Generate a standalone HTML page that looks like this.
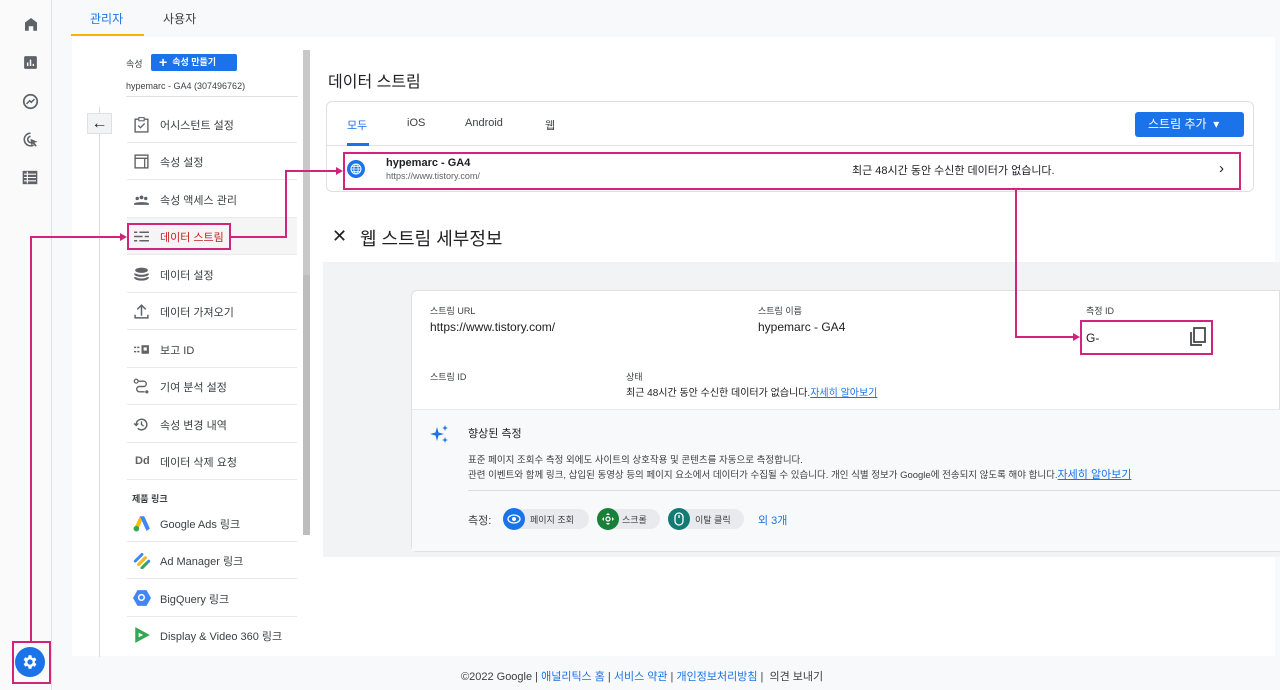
<!DOCTYPE html>
<html><head><meta charset="utf-8"><style>
*{box-sizing:border-box;margin:0;padding:0}
body{width:1280px;height:690px;overflow:hidden;background:#f8f9fa;font-family:"Liberation Sans","Noto Sans CJK KR",sans-serif;color:#3c4043;position:relative}
.a{position:absolute}
.t{font-size:11px;color:#3c4043;white-space:nowrap}
.item{position:absolute;left:127px;width:170px;height:37px;border-bottom:1px solid #e8eaed}
.item svg.ic{position:absolute;left:6px;top:10px;width:17px;height:17px}
.item span.l{position:absolute;left:33px;top:11px;font-size:11px;color:#3c4043;white-space:nowrap}
.pk{position:absolute;background:#d0257a}
.pb{position:absolute;border:2px solid #d0257a}
.blue{color:#1a73e8}
</style></head><body>
<!-- rail -->
<div class="a" style="left:0;top:0;width:52px;height:690px;background:#fafafa;border-right:1px solid #e0e0e0"></div>
<svg class="a" style="left:22px;top:15px" width="18" height="18" viewBox="0 0 24 24"><path d="M4 21V10l8-6 8 6v11h-5v-6H9v6z" fill="#5f6368"/></svg>
<svg class="a" style="left:22px;top:54px" width="17" height="17" viewBox="0 0 24 24"><rect x="3" y="3" width="18" height="18" rx="2" fill="#5f6368"/><path d="M8 17v-5M12 17V8M16 17v-3" stroke="#fff" stroke-width="2"/></svg>
<svg class="a" style="left:21px;top:92px" width="19" height="19" viewBox="0 0 24 24"><circle cx="12" cy="12" r="8.5" fill="none" stroke="#5f6368" stroke-width="2.2"/><path d="M7 15l4-4 2 2 4-4" fill="none" stroke="#5f6368" stroke-width="2"/></svg>
<svg class="a" style="left:21px;top:130px" width="19" height="19" viewBox="0 0 24 24"><path d="M12 4a8 8 0 1 0 4 15" fill="none" stroke="#5f6368" stroke-width="2"/><path d="M12 8a4 4 0 1 0 1 8" fill="none" stroke="#5f6368" stroke-width="2"/><path d="M12 11l9 4-4 1 3 4-2 1-3-4-2 3z" fill="#5f6368"/></svg>
<svg class="a" style="left:22px;top:170px" width="16" height="15" viewBox="0 0 24 22"><rect x="1" y="1" width="22" height="20" fill="#5f6368"/><path d="M3 6h18M3 11h18M3 16h18M8 2v18" stroke="#fff" stroke-width="1.6"/></svg>
<div class="a" style="left:15px;top:647px;width:30px;height:30px;border-radius:50%;background:#1a73e8"></div>
<svg class="a" style="left:21px;top:653px" width="18" height="18" viewBox="0 0 24 24"><path fill="#fff" d="M19.4 13a7.5 7.5 0 0 0 0-2l2.1-1.6-2-3.5-2.5 1a7 7 0 0 0-1.7-1L15 3h-4l-.3 2.7a7 7 0 0 0-1.7 1l-2.5-1-2 3.5L6.6 11a7.5 7.5 0 0 0 0 2l-2.1 1.6 2 3.5 2.5-1a7 7 0 0 0 1.7 1L11 21h4l.3-2.7a7 7 0 0 0 1.7-1l2.5 1 2-3.5zM13 15.5a3.5 3.5 0 1 1 0-7 3.5 3.5 0 0 1 0 7z" transform="translate(-1 0)"/></svg>
<!-- tabs -->
<div class="a t" style="left:90px;top:10px;font-size:12px;color:#1a73e8">관리자</div>
<div class="a t" style="left:163px;top:10px;font-size:12px;color:#3c4043">사용자</div>
<div class="a" style="left:71px;top:34px;width:73px;height:2px;background:#f4b400"></div>
<!-- main white -->
<div class="a" style="left:72px;top:37px;width:1203px;height:619px;background:#fff"></div>
<!-- left panel -->
<div class="a t" style="left:126px;top:57px;font-size:9px">속성</div>
<div class="a" style="left:151px;top:54px;width:86px;height:17px;background:#1a73e8;border-radius:2px;color:#fff;font-size:9px;font-weight:bold;line-height:17px;padding-left:8px"><span style="font-size:14px;vertical-align:-2px">+</span>&nbsp; 속성 만들기</div>
<div class="a t" style="left:126px;top:81px;font-size:9px">hypemarc - GA4 (307496762)</div>
<div class="a" style="left:126px;top:96px;width:172px;height:1px;background:#e0e0e0"></div>
<div class="a" style="left:99px;top:107px;width:1px;height:550px;background:#dadce0"></div>
<div class="a" style="left:87px;top:113px;width:25px;height:21px;background:#f1f3f4;border:1px solid #e0e0e0;text-align:center;font-size:16px;line-height:19px;color:#202124">←</div>
<div class="a" style="left:303px;top:50px;width:7px;height:225px;background:#c8c8c8"></div>
<div class="a" style="left:303px;top:275px;width:7px;height:260px;background:#bdbdbd"></div>
<div class="item" style="top:106px"><svg class="ic" viewBox="0 0 16 16"><rect x="2" y="3" width="12" height="12" fill="none" stroke="#5f6368" stroke-width="1.3"/><rect x="5.5" y="1.5" width="5" height="3" fill="#fff" stroke="#5f6368"/><path d="M5 9l2 2 4-4" fill="none" stroke="#5f6368" stroke-width="1.3"/></svg><span class="l">어시스턴트 설정</span></div>
<div class="item" style="top:143px"><svg class="ic" viewBox="0 0 16 16"><rect x="2" y="2" width="12" height="12" fill="none" stroke="#5f6368" stroke-width="1.3"/><path d="M2 5h12M11 5v9" stroke="#5f6368" stroke-width="1.2"/></svg><span class="l">속성 설정</span></div>
<div class="item" style="top:181px"><svg class="ic" viewBox="0 0 16 16"><circle cx="4" cy="7" r="1.6" fill="#5f6368"/><circle cx="8" cy="6" r="1.8" fill="#5f6368"/><circle cx="12" cy="7" r="1.6" fill="#5f6368"/><path d="M1 12c0-2 14-2 14 0v1H1z" fill="#5f6368"/></svg><span class="l">속성 액세스 관리</span></div>
<div class="item" style="top:218px;background:#f5f5f5"><svg class="ic" viewBox="0 0 16 16"><path d="M1 4h3M6 4h9M1 8h8M11 8h4M1 12h3M6 12h9" stroke="#5f6368" stroke-width="1.4"/></svg><span class="l" style="color:#c5221f">데이터 스트림</span></div>
<div class="item" style="top:256px"><svg class="ic" viewBox="0 0 16 16"><ellipse cx="8" cy="4" rx="6" ry="2.5" fill="#5f6368"/><path d="M2 7c0 3 12 3 12 0M2 10.5c0 3 12 3 12 0" fill="none" stroke="#5f6368" stroke-width="2"/></svg><span class="l">데이터 설정</span></div>
<div class="item" style="top:293px"><svg class="ic" viewBox="0 0 16 16"><path d="M8 12V3M4 6l4-4 4 4M2 11v3h12v-3" fill="none" stroke="#5f6368" stroke-width="1.4"/></svg><span class="l">데이터 가져오기</span></div>
<div class="item" style="top:331px"><svg class="ic" viewBox="0 0 16 16"><path d="M1 6h2M4 6h2M1 10h2M4 10h2" stroke="#5f6368" stroke-width="1.3"/><rect x="8" y="4" width="7" height="8" fill="#5f6368"/><rect x="10" y="6" width="3" height="3" fill="#fff"/></svg><span class="l">보고 ID</span></div>
<div class="item" style="top:368px"><svg class="ic" viewBox="0 0 16 16"><circle cx="3" cy="3" r="1.8" fill="none" stroke="#5f6368" stroke-width="1.2"/><circle cx="13" cy="13" r="1.5" fill="#5f6368"/><path d="M5 3h5a2.5 2.5 0 0 1 0 5H6a2.5 2.5 0 0 0 0 5h5" fill="none" stroke="#5f6368" stroke-width="1.3"/></svg><span class="l">기여 분석 설정</span></div>
<div class="item" style="top:406px"><svg class="ic" viewBox="0 0 16 16"><path d="M3 8a5 5 0 1 1 1.5 3.6" fill="none" stroke="#5f6368" stroke-width="1.4"/><path d="M1 7l2 2 2-2" fill="none" stroke="#5f6368" stroke-width="1.3"/><path d="M8 5v3l2 1.5" fill="none" stroke="#5f6368" stroke-width="1.3"/></svg><span class="l">속성 변경 내역</span></div>
<div class="item" style="top:443px"><span class="a" style="left:8px;top:12px;font-weight:bold;font-size:11px;color:#5f6368">Dd</span><span class="l">데이터 삭제 요청</span></div>
<div class="a t" style="left:132px;top:492px;font-size:9px;font-weight:bold">제품 링크</div>
<div class="item" style="top:505px"><svg class="ic" viewBox="0 0 16 16" style="width:18px;height:18px;top:9px"><path d="M6 2h4l5 11-3 2z" fill="#4285f4"/><path d="M6 2l-5 11 3 2 4-9z" fill="#fbbc04"/><circle cx="3" cy="13" r="2.5" fill="#34a853"/></svg><span class="l">Google Ads 링크</span></div>
<div class="item" style="top:542px"><svg class="ic" viewBox="0 0 16 16" style="width:18px;height:18px;top:9px"><path d="M2 9l6-6M5 12l6-6M8 15l6-6" stroke-width="2.6" stroke-linecap="round" stroke="#4285f4"/><path d="M5 12l6-6" stroke="#fbbc04" stroke-width="2.6" stroke-linecap="round"/><path d="M8 15l4-4" stroke="#34a853" stroke-width="2.6" stroke-linecap="round"/></svg><span class="l">Ad Manager 링크</span></div>
<div class="item" style="top:580px"><svg class="ic" viewBox="0 0 16 16" style="width:18px;height:18px;top:9px"><path d="M4 1h8l4 7-4 7H4L0 8z" fill="#4285f4"/><circle cx="7.5" cy="7.5" r="2.5" fill="none" stroke="#fff" stroke-width="1.3"/></svg><span class="l">BigQuery 링크</span></div>
<div class="item" style="top:617px;border:none"><svg class="ic" viewBox="0 0 16 16" style="width:18px;height:18px;top:9px"><path d="M2 1l13 7-13 7z" fill="#34a853"/><path d="M5 6l4 2-4 2z" fill="#fff"/></svg><span class="l">Display &amp; Video 360 링크</span></div>
<!-- right content -->
<div class="a t" style="left:328px;top:68px;font-size:16px;color:#202124">데이터 스트림</div>
<div class="a" style="left:326px;top:101px;width:928px;height:91px;border:1px solid #e0e0e0;border-radius:6px;background:#fff"></div>
<div class="a" style="left:327px;top:145px;width:926px;height:1px;background:#e0e0e0"></div>
<div class="a t blue" style="left:347px;top:117px">모두</div>
<div class="a" style="left:347px;top:143px;width:22px;height:3px;background:#1a73e8"></div>
<div class="a t" style="left:407px;top:117px">iOS</div>
<div class="a t" style="left:465px;top:117px">Android</div>
<div class="a t" style="left:545px;top:117px">웹</div>
<div class="a" style="left:1135px;top:112px;width:109px;height:25px;background:#1a73e8;border-radius:3px;color:#fff;font-size:12px;line-height:25px;padding-left:13px">스트림 추가 &nbsp;▾</div>
<div class="a" style="left:347px;top:160px;width:18px;height:18px;border-radius:50%;background:#1a73e8"></div>
<svg class="a" style="left:350px;top:163px" width="12" height="12" viewBox="0 0 12 12"><circle cx="6" cy="6" r="5" fill="none" stroke="#fff"/><path d="M1 6h10M6 1c-3 3-3 7 0 10M6 1c3 3 3 7 0 10M2 3.5h8M2 8.5h8" fill="none" stroke="#fff" stroke-width=".8"/></svg>
<div class="a t" style="left:386px;top:157px;font-weight:bold;color:#202124">hypemarc - GA4</div>
<div class="a t" style="left:386px;top:171px;font-size:9px;color:#5f6368">https://www.tistory.com/</div>
<div class="a t" style="left:852px;top:162px;color:#202124">최근 48시간 동안 수신한 데이터가 없습니다.</div>
<div class="a t" style="left:1219px;top:160px;font-size:15px;color:#202124">›</div>
<div class="a t" style="left:332px;top:226px;font-size:18px;color:#202124">✕</div>
<div class="a t" style="left:360px;top:225px;font-size:18px;color:#202124">웹 스트림 세부정보</div>
<!-- detail -->
<div class="a" style="left:323px;top:262px;width:957px;height:295px;background:#f1f3f4"></div>
<div class="a" style="left:411px;top:290px;width:869px;height:262px;background:#fff;border:1px solid #e0e0e0;border-radius:6px 0 0 6px"></div>
<div class="a" style="left:412px;top:409px;width:868px;height:142px;background:#f8f9fa;border-top:1px solid #e8eaed"></div>
<div class="a t" style="left:430px;top:304px;font-size:9px">스트림 URL</div>
<div class="a t" style="left:430px;top:320px;font-size:12px;color:#202124">https://www.tistory.com/</div>
<div class="a t" style="left:758px;top:304px;font-size:9px">스트림 이름</div>
<div class="a t" style="left:758px;top:320px;font-size:12px;color:#202124">hypemarc - GA4</div>
<div class="a t" style="left:1086px;top:304px;font-size:9px">측정 ID</div>
<div class="a t" style="left:1086px;top:331px;font-size:12px;color:#202124">G-</div>
<svg class="a" style="left:1189px;top:327px" width="18" height="20" viewBox="0 0 18 20"><rect x="5" y="1" width="11" height="14" fill="none" stroke="#3c4043" stroke-width="1.7"/><path d="M2 5v13h11" fill="none" stroke="#3c4043" stroke-width="1.7"/></svg>
<div class="a t" style="left:430px;top:370px;font-size:9px">스트림 ID</div>
<div class="a t" style="left:626px;top:370px;font-size:9px">상태</div>
<div class="a t" style="left:626px;top:384px;font-size:10px;color:#202124">최근 48시간 동안 수신한 데이터가 없습니다.<span class="blue" style="text-decoration:underline">자세히 알아보기</span></div>
<svg class="a" style="left:430px;top:424px" width="20" height="20" viewBox="0 0 20 20"><path d="M7 3l1.5 5.5L14 10l-5.5 1.5L7 17l-1.5-5.5L0 10l5.5-1.5z" fill="#1a73e8"/><path d="M15 1l.8 2.2L18 4l-2.2.8L15 7l-.8-2.2L12 4l2.2-.8zM15 13l.8 2.2 2.2.8-2.2.8L15 19l-.8-2.2-2.2-.8 2.2-.8z" fill="#1a73e8"/></svg>
<div class="a t" style="left:468px;top:425px;color:#202124">향상된 측정</div>
<div class="a t" style="left:468px;top:452px;font-size:9.5px">표준 페이지 조회수 측정 외에도 사이트의 상호작용 및 콘텐츠를 자동으로 측정합니다.</div>
<div class="a t" style="left:468px;top:466px;font-size:9.5px">관련 이벤트와 함께 링크, 삽입된 동영상 등의 페이지 요소에서 데이터가 수집될 수 있습니다. 개인 식별 정보가 Google에 전송되지 않도록 해야 합니다.<span class="blue" style="text-decoration:underline;font-size:11px">자세히 알아보기</span></div>
<div class="a" style="left:468px;top:490px;width:812px;height:1px;background:#dadce0"></div>
<div class="a t" style="left:468px;top:512px">측정:</div>
<div class="a" style="left:503px;top:509px;width:86px;height:20px;border-radius:10px;background:#e8eaed"></div>
<div class="a" style="left:503px;top:508px;width:22px;height:22px;border-radius:50%;background:#1a73e8"></div>
<svg class="a" style="left:507px;top:512px" width="14" height="14" viewBox="0 0 14 14"><ellipse cx="7" cy="7" rx="6" ry="4" fill="none" stroke="#fff" stroke-width="1.3"/><circle cx="7" cy="7" r="2" fill="#fff"/></svg>
<div class="a t" style="left:530px;top:513px;font-size:9px">페이지 조회</div>
<div class="a" style="left:597px;top:509px;width:63px;height:20px;border-radius:10px;background:#e8eaed"></div>
<div class="a" style="left:597px;top:508px;width:22px;height:22px;border-radius:50%;background:#188038"></div>
<svg class="a" style="left:601px;top:512px" width="14" height="14" viewBox="0 0 14 14"><path d="M7 1l2 2H5zM7 13l2-2H5zM1 7l2-2v4zM13 7l-2-2v4z" fill="#fff"/><circle cx="7" cy="7" r="2" fill="none" stroke="#fff" stroke-width="1.3"/></svg>
<div class="a t" style="left:622px;top:513px;font-size:9px">스크롤</div>
<div class="a" style="left:668px;top:509px;width:76px;height:20px;border-radius:10px;background:#e8eaed"></div>
<div class="a" style="left:668px;top:508px;width:22px;height:22px;border-radius:50%;background:#137b73"></div>
<svg class="a" style="left:673px;top:512px" width="12" height="14" viewBox="0 0 12 14"><rect x="2" y="1" width="8" height="12" rx="4" fill="none" stroke="#fff" stroke-width="1.3"/><path d="M6 3v3" stroke="#fff" stroke-width="1.3"/></svg>
<div class="a t" style="left:695px;top:513px;font-size:9px">이탈 클릭</div>
<div class="a t blue" style="left:758px;top:512px">외 3개</div>
<!-- footer -->
<div class="a t" style="left:461px;top:668px;font-size:11px">©2022 Google | <span class="blue">애널리틱스 홈</span> | <span class="blue">서비스 약관</span> | <span class="blue">개인정보처리방침</span> | &nbsp;의견 보내기</div>
<!-- annotations -->
<div class="pb" style="left:12px;top:641px;width:39px;height:43px"></div>
<div class="pk" style="left:30px;top:237px;width:2px;height:404px"></div>
<div class="pk" style="left:30px;top:236px;width:92px;height:2px"></div>
<div class="a" style="left:120px;top:233px;border-left:7px solid #d0257a;border-top:4px solid transparent;border-bottom:4px solid transparent"></div>
<div class="pb" style="left:127px;top:223px;width:104px;height:27px"></div>
<div class="pk" style="left:231px;top:236px;width:55px;height:2px"></div>
<div class="pk" style="left:285px;top:171px;width:2px;height:67px"></div>
<div class="pk" style="left:285px;top:170px;width:52px;height:2px"></div>
<div class="a" style="left:336px;top:167px;border-left:7px solid #d0257a;border-top:4px solid transparent;border-bottom:4px solid transparent"></div>
<div class="pb" style="left:343px;top:152px;width:898px;height:38px"></div>
<div class="pk" style="left:1015px;top:190px;width:2px;height:148px"></div>
<div class="pk" style="left:1015px;top:336px;width:59px;height:2px"></div>
<div class="a" style="left:1073px;top:333px;border-left:7px solid #d0257a;border-top:4px solid transparent;border-bottom:4px solid transparent"></div>
<div class="pb" style="left:1080px;top:320px;width:133px;height:35px"></div>
</body></html>
